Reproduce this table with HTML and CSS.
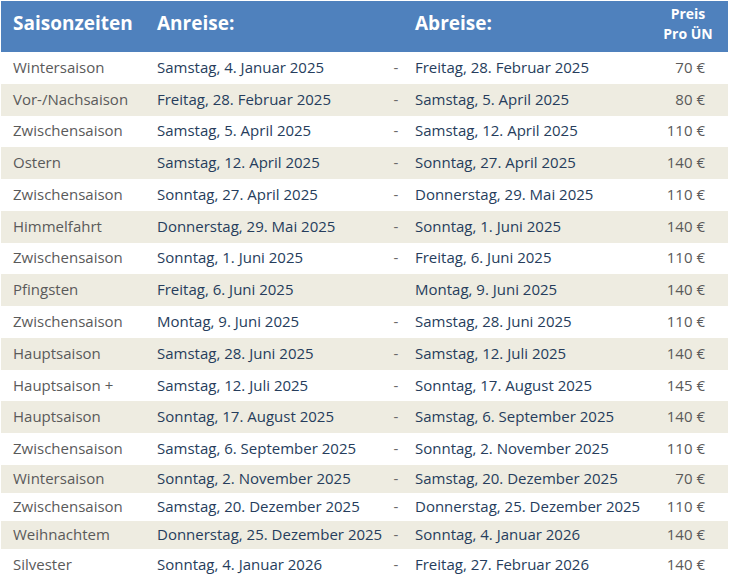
FILE: index.html
```html
<!DOCTYPE html>
<html lang="de">
<head>
<meta charset="utf-8">
<title>Saisonzeiten</title>
<link rel="stylesheet" href="styles.css">
</head>
<body>
<div class="table">
  <div class="row head">
    <div class="c name">Saisonzeiten</div>
    <div class="c from">Anreise:</div>
    <div class="c dash"></div>
    <div class="c to">Abreise:</div>
    <div class="c price">Preis<br>Pro ÜN</div>
  </div>
  <div class="row"><div class="c name">Wintersaison</div><div class="c from">Samstag, 4. Januar 2025</div><div class="c dash">-</div><div class="c to">Freitag, 28. Februar 2025</div><div class="c price">70 €</div></div>
  <div class="row alt"><div class="c name">Vor-/Nachsaison</div><div class="c from">Freitag, 28. Februar 2025</div><div class="c dash">-</div><div class="c to">Samstag, 5. April 2025</div><div class="c price">80 €</div></div>
  <div class="row"><div class="c name">Zwischensaison</div><div class="c from">Samstag, 5. April 2025</div><div class="c dash">-</div><div class="c to">Samstag, 12. April 2025</div><div class="c price">110 €</div></div>
  <div class="row alt"><div class="c name">Ostern</div><div class="c from">Samstag, 12. April 2025</div><div class="c dash">-</div><div class="c to">Sonntag, 27. April 2025</div><div class="c price">140 €</div></div>
  <div class="row"><div class="c name">Zwischensaison</div><div class="c from">Sonntag, 27. April 2025</div><div class="c dash">-</div><div class="c to">Donnerstag, 29. Mai 2025</div><div class="c price">110 €</div></div>
  <div class="row alt"><div class="c name">Himmelfahrt</div><div class="c from">Donnerstag, 29. Mai 2025</div><div class="c dash">-</div><div class="c to">Sonntag, 1. Juni 2025</div><div class="c price">140 €</div></div>
  <div class="row"><div class="c name">Zwischensaison</div><div class="c from">Sonntag, 1. Juni 2025</div><div class="c dash">-</div><div class="c to">Freitag, 6. Juni 2025</div><div class="c price">110 €</div></div>
  <div class="row alt"><div class="c name">Pfingsten</div><div class="c from">Freitag, 6. Juni 2025</div><div class="c dash"></div><div class="c to">Montag, 9. Juni 2025</div><div class="c price">140 €</div></div>
  <div class="row"><div class="c name">Zwischensaison</div><div class="c from">Montag, 9. Juni 2025</div><div class="c dash">-</div><div class="c to">Samstag, 28. Juni 2025</div><div class="c price">110 €</div></div>
  <div class="row alt"><div class="c name">Hauptsaison</div><div class="c from">Samstag, 28. Juni 2025</div><div class="c dash">-</div><div class="c to">Samstag, 12. Juli 2025</div><div class="c price">140 €</div></div>
  <div class="row"><div class="c name">Hauptsaison +</div><div class="c from">Samstag, 12. Juli 2025</div><div class="c dash">-</div><div class="c to">Sonntag, 17. August 2025</div><div class="c price">145 €</div></div>
  <div class="row alt"><div class="c name">Hauptsaison</div><div class="c from">Sonntag, 17. August 2025</div><div class="c dash">-</div><div class="c to">Samstag, 6. September 2025</div><div class="c price">140 €</div></div>
  <div class="row"><div class="c name">Zwischensaison</div><div class="c from">Samstag, 6. September 2025</div><div class="c dash">-</div><div class="c to">Sonntag, 2. November 2025</div><div class="c price">110 €</div></div>
  <div class="row alt short"><div class="c name">Wintersaison</div><div class="c from">Sonntag, 2. November 2025</div><div class="c dash">-</div><div class="c to">Samstag, 20. Dezember 2025</div><div class="c price">70 €</div></div>
  <div class="row short"><div class="c name">Zwischensaison</div><div class="c from">Samstag, 20. Dezember 2025</div><div class="c dash">-</div><div class="c to">Donnerstag, 25. Dezember 2025</div><div class="c price">110 €</div></div>
  <div class="row alt short"><div class="c name">Weihnachtem</div><div class="c from">Donnerstag, 25. Dezember 2025</div><div class="c dash">-</div><div class="c to">Sonntag, 4. Januar 2026</div><div class="c price">140 €</div></div>
  <div class="row last"><div class="c name">Silvester</div><div class="c from">Sonntag, 4. Januar 2026</div><div class="c dash">-</div><div class="c to">Freitag, 27. Februar 2026</div><div class="c price">140 €</div></div>
</div>
</body>
</html>
```
FILE: styles.css
```css
html, body {
  margin: 0;
  padding: 0;
  background: #ffffff;
}
body {
  font-family: "Open Sans", "Noto Sans", sans-serif;
  font-size: 15px;
  overflow: hidden;
}
.table {
  margin: 1px 0 0 1px;
  width: 727px;
}
.row {
  display: grid;
  grid-template-columns: 144px 240px 22px 233px 88px;
  align-items: center;
  height: 31.77px;
  background: #ffffff;
}
.row.alt {
  background: #eeece1;
}
.row.short {
  height: 28px;
}
.row.last {
  height: 32px;
}
.c {
  white-space: nowrap;
  padding-bottom: 2px;
}
.name {
  padding-left: 12px;
  color: #5a5a5a;
}
.from {
  padding-left: 12px;
  color: #263d5c;
}
.dash {
  text-align: center;
  color: #6a6a6a;
}
.to {
  padding-left: 8px;
  color: #263d5c;
}
.price {
  text-align: right;
  padding-right: 23px;
  color: #5a5a5a;
}
.row.head {
  height: 51px;
  background: #4f81bd;
  color: #ffffff;
  font-weight: 700;
}
.head .c {
  color: #ffffff;
}
.head .name,
.head .from,
.head .to {
  font-size: 19px;
  padding-bottom: 8px;
}
.head .price {
  text-align: center;
  padding-right: 0;
  padding-left: 8px;
  font-size: 14px;
  line-height: 20px;
  padding-bottom: 5px;
}
```
